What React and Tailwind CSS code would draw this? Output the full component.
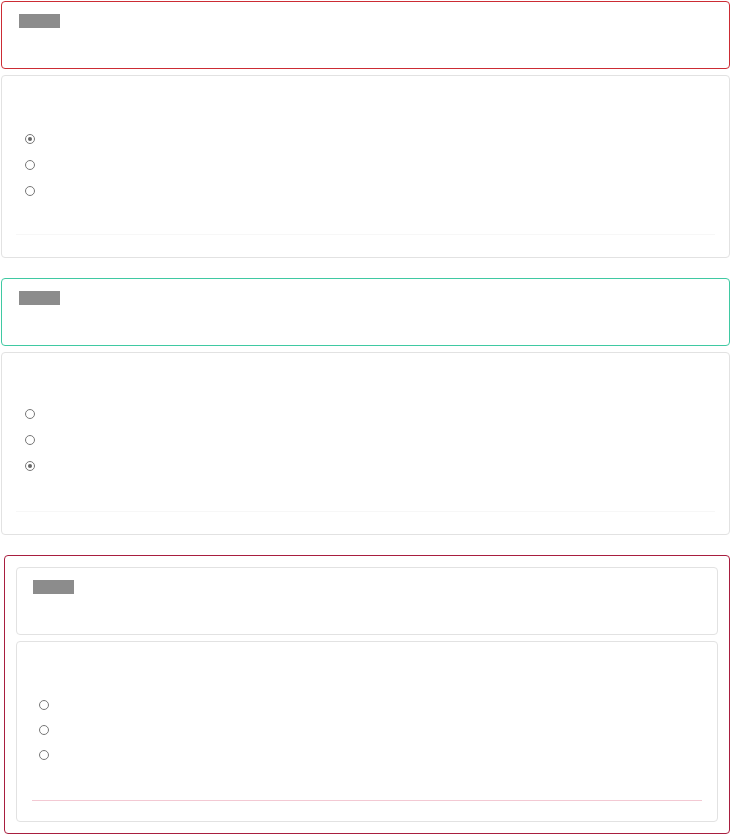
import React from "react";

function Radio({ checked }) {
  return (
    <span className="flex h-[10px] w-[10px] items-center justify-center rounded-full border border-[#777] bg-white">
      {checked && <span className="h-[4px] w-[4px] rounded-full bg-[#666]" />}
    </span>
  );
}

function Header({ border, bar = "ml-[17px]" }) {
  return (
    <div className={`h-[68px] rounded-[4px] border bg-white pt-[12px] ${border}`}>
      <div className={`h-[14px] w-[41px] bg-[#8c8c8c] ${bar}`} />
    </div>
  );
}

function Options({
  checked,
  line = "bg-[#f7f7f7]",
  lineX = "mx-[14px]",
  radioX = "pl-[23px]",
  h = "h-[183px]",
  pt = "pt-[58px]",
  gap = "gap-[16px]",
  mt = "mt-[38px]",
}) {
  return (
    <div className={`flex flex-col rounded-[4px] border border-[#e2e2e2] bg-white ${h}`}>
      <div className={`flex flex-col ${gap} ${pt} ${radioX}`}>
        {[0, 1, 2].map((i) => (
          <Radio key={i} checked={checked === i} />
        ))}
      </div>
      <div className={`h-px ${mt} ${line} ${lineX}`} />
    </div>
  );
}

export default function App() {
  return (
    <div className="w-[731px] bg-white pt-[1px] font-['Liberation_Sans',sans-serif]">
      <div className="ml-[1px] w-[729px]">
        <Header border="border-[#cc2c34]" />
        <div className="mt-[6px]">
          <Options checked={0} />
        </div>
        <div className="mt-[20px]">
          <Header border="border-[#3fc9a2]" />
        </div>
        <div className="mt-[6px]">
          <Options checked={2} pt="pt-[56px]" mt="mt-[40px]" />
        </div>
      </div>
      <div className="ml-[4px] mt-[20px] h-[279px] w-[726px] rounded-[4px] border border-[#a81e3f] px-[11px] pt-[11px]">
        <div className="w-[702px]">
          <Header border="border-[#e2e2e2]" bar="ml-[16px]" />
          <div className="mt-[6px]">
            <Options
              checked={-1}
              line="bg-[#f3c9d3]"
              lineX="mx-[15px]"
              radioX="pl-[22px]"
              h="h-[181px]"
              gap="gap-[15px]"
              mt="mt-[40px]"
            />
          </div>
        </div>
      </div>
    </div>
  );
}
